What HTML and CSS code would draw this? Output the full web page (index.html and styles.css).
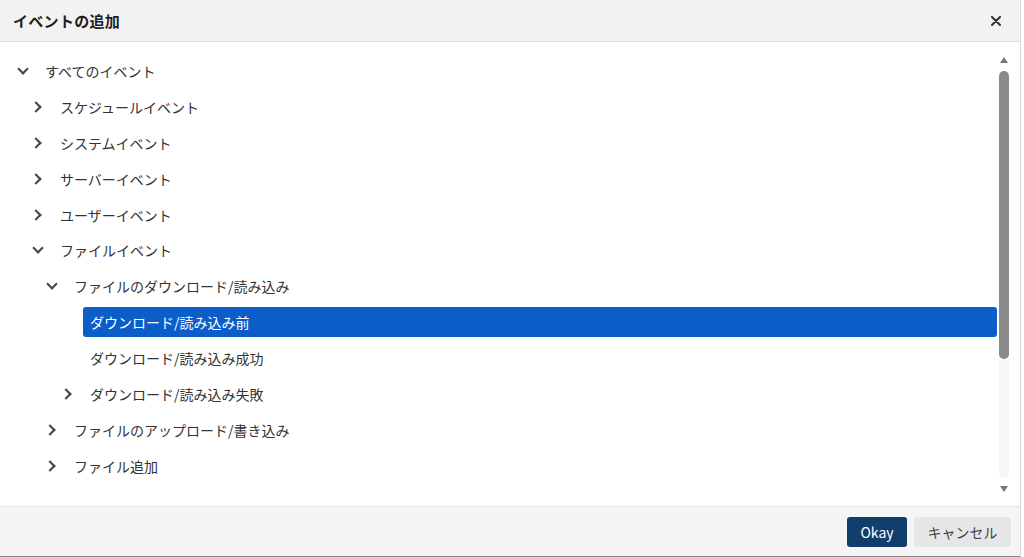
FILE: index.html
```html
<!DOCTYPE html>
<html lang="ja">
<head>
<meta charset="utf-8">
<link rel="stylesheet" href="styles.css">
</head>
<body>
<div class="dialog">
  <div class="header">
    <span class="title">イベントの追加</span>
    <svg class="close" width="10" height="10" viewBox="0 0 10 10"><path d="M1 1L9 9M9 1L1 9" stroke="#333" stroke-width="2" stroke-linecap="round"/></svg>
  </div>
  <div class="body">
    <div class="tree">
      <div class="row l0"><span class="chev down"></span><span>すべてのイベント</span></div>
      <div class="row l1"><span class="chev right"></span><span>スケジュールイベント</span></div>
      <div class="row l1"><span class="chev right"></span><span>システムイベント</span></div>
      <div class="row l1"><span class="chev right"></span><span>サーバーイベント</span></div>
      <div class="row l1"><span class="chev right"></span><span>ユーザーイベント</span></div>
      <div class="row l1"><span class="chev down"></span><span>ファイルイベント</span></div>
      <div class="row l2"><span class="chev down"></span><span>ファイルのダウンロード/読み込み</span></div>
      <div class="row l3 leaf"><span class="sel">ダウンロード/読み込み前</span></div>
      <div class="row l3 leaf"><span class="item">ダウンロード/読み込み成功</span></div>
      <div class="row l3"><span class="chev right"></span><span>ダウンロード/読み込み失敗</span></div>
      <div class="row l2"><span class="chev right"></span><span>ファイルのアップロード/書き込み</span></div>
      <div class="row l2"><span class="chev right"></span><span>ファイル追加</span></div>
    </div>
    <div class="scrollbar">
      <span class="arrow up"></span>
      <div class="track"><div class="thumb"></div></div>
      <span class="arrow dn"></span>
    </div>
  </div>
  <div class="footer">
    <button class="btn ok">Okay</button>
    <button class="btn cancel">キャンセル</button>
  </div>
</div>
</body>
</html>
```
FILE: styles.css
```css
* { box-sizing: border-box; }
html, body { margin: 0; height: 100%; background: #fff; }
body {
  font-family: "Noto Sans CJK JP", "Noto Sans", sans-serif;
  color: #333;
  font-size: 14px;
}
.dialog {
  width: 1021px;
  height: 557px;
  display: flex;
  flex-direction: column;
  border-right: 1px solid #d6d6d6;
  border-bottom: 1px solid #888;
  background: #fff;
}
.header {
  height: 42px;
  flex: none;
  background: #f2f2f2;
  border-bottom: 1px solid #e2e2e2;
  display: flex;
  align-items: center;
  justify-content: space-between;
  padding: 0 19px 0 13px;
}
.title {
  font-weight: bold;
  font-size: 15px;
  color: #1e1e1e;
  letter-spacing: 0.3px;
}
.close { display: block; }
.body {
  flex: 1;
  display: flex;
  min-height: 0;
}
.tree {
  flex: 1;
  padding-top: 11px;
}
.row {
  height: 35.9px;
  display: flex;
  align-items: center;
  color: #333;
  font-size: 14px;
}
.row.l0 { padding-left: 16px; }
.row.l1 { padding-left: 31px; }
.row.l2 { padding-left: 45px; }
.row.l3 { padding-left: 61px; }
.row.leaf { padding-left: 83px; }
.chev {
  width: 14px;
  height: 14px;
  margin-right: 15px;
  position: relative;
  flex: none;
}
.chev::before {
  content: "";
  position: absolute;
  width: 6px;
  height: 6px;
  border-right: 2px solid #444;
  border-bottom: 2px solid #444;
  left: 3px;
  top: 3px;
}
.chev.down::before { transform: rotate(45deg); top: 1px; left: 3px; }
.chev.right::before { transform: rotate(-45deg); left: 1px; top: 3px; }
.sel {
  flex: 1;
  height: 30px;
  display: flex;
  align-items: center;
  padding-left: 7px;
  background: #0b5dc9;
  color: #fff;
  border-radius: 3px;
}
.item { padding-left: 7px; }
.scrollbar {
  width: 14px;
  flex: none;
  display: flex;
  flex-direction: column;
  align-items: center;
  padding: 15px 0 14px;
  margin-right: 9px;
}
.arrow {
  width: 0; height: 0;
  border-left: 4px solid transparent;
  border-right: 4px solid transparent;
}
.arrow.up { border-bottom: 6px solid #777; margin-bottom: 8px; }
.arrow.dn { border-top: 6px solid #777; margin-top: 8px; }
.track {
  flex: 1;
  width: 10px;
  background: #f7f7f7;
  border-radius: 5px;
}
.thumb {
  width: 10px;
  height: 288px;
  background: #8a8a8a;
  border-radius: 5px;
}
.footer {
  height: 50px;
  flex: none;
  background: #f5f5f5;
  border-top: 1px solid #e6e6e6;
  display: flex;
  align-items: center;
  justify-content: flex-end;
  gap: 7px;
  padding-right: 9px;
}
.btn {
  height: 30px;
  border: none;
  border-radius: 3px;
  font-family: "Noto Sans CJK JP", "Noto Sans", sans-serif;
  font-size: 14px;
  padding: 0 13px;
}
.ok {
  background: #123e6c;
  color: #fff;
  width: 60px;
}
.cancel {
  background: #e4e6e8;
  color: #444;
  width: 97px;
}
```
